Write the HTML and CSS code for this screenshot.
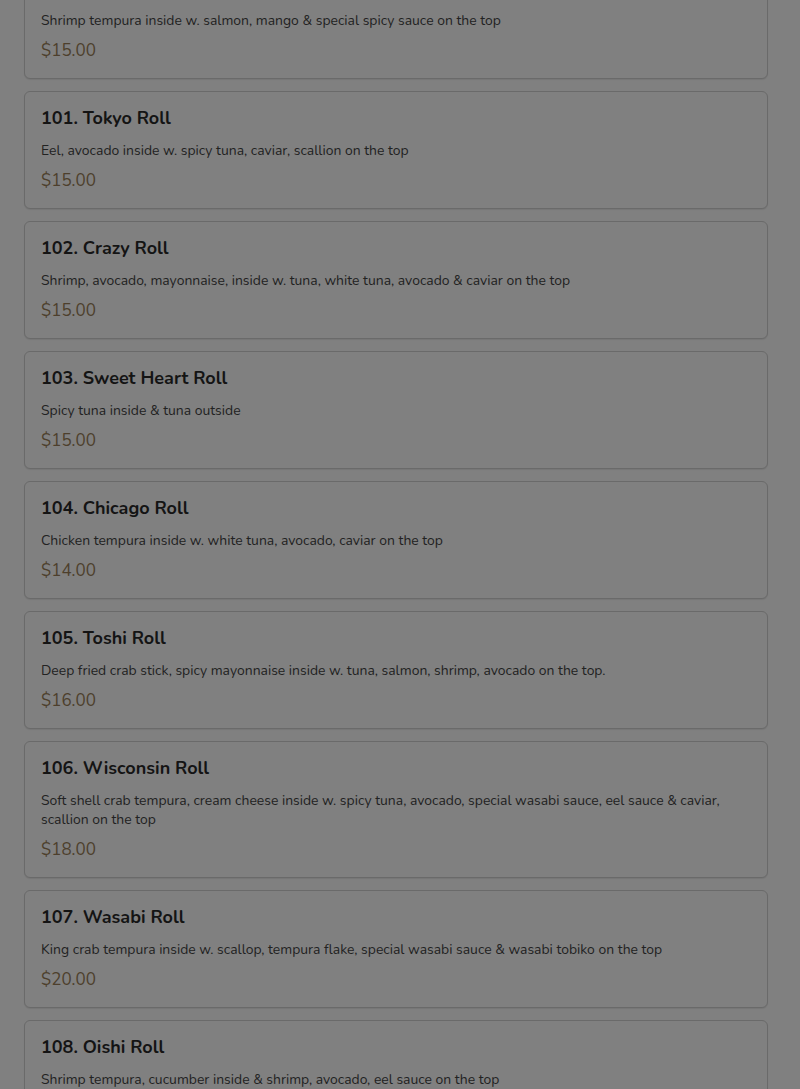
FILE: index.html
```html
<!DOCTYPE html>
<html>
<head>
<meta charset="utf-8">
<link rel="stylesheet" href="styles.css">
</head>
<body>
<div class="menu">
  <div class="card first">
    <h3 class="name">100. Mango Roll</h3>
    <p class="desc">Shrimp tempura inside w. salmon, mango &amp; special spicy sauce on the top</p>
    <div class="price">$15.00</div>
  </div>
  <div class="card">
    <h3 class="name">101. Tokyo Roll</h3>
    <p class="desc">Eel, avocado inside w. spicy tuna, caviar, scallion on the top</p>
    <div class="price">$15.00</div>
  </div>
  <div class="card">
    <h3 class="name">102. Crazy Roll</h3>
    <p class="desc">Shrimp, avocado, mayonnaise, inside w. tuna, white tuna, avocado &amp; caviar on the top</p>
    <div class="price">$15.00</div>
  </div>
  <div class="card">
    <h3 class="name">103. Sweet Heart Roll</h3>
    <p class="desc">Spicy tuna inside &amp; tuna outside</p>
    <div class="price">$15.00</div>
  </div>
  <div class="card">
    <h3 class="name">104. Chicago Roll</h3>
    <p class="desc">Chicken tempura inside w. white tuna, avocado, caviar on the top</p>
    <div class="price">$14.00</div>
  </div>
  <div class="card">
    <h3 class="name">105. Toshi Roll</h3>
    <p class="desc">Deep fried crab stick, spicy mayonnaise inside w. tuna, salmon, shrimp, avocado on the top.</p>
    <div class="price">$16.00</div>
  </div>
  <div class="card">
    <h3 class="name">106. Wisconsin Roll</h3>
    <p class="desc">Soft shell crab tempura, cream cheese inside w. spicy tuna, avocado, special wasabi sauce, eel sauce &amp; caviar, scallion on the top</p>
    <div class="price">$18.00</div>
  </div>
  <div class="card">
    <h3 class="name">107. Wasabi Roll</h3>
    <p class="desc">King crab tempura inside w. scallop, tempura flake, special wasabi sauce &amp; wasabi tobiko on the top</p>
    <div class="price">$20.00</div>
  </div>
  <div class="card">
    <h3 class="name">108. Oishi Roll</h3>
    <p class="desc">Shrimp tempura, cucumber inside &amp; shrimp, avocado, eel sauce on the top</p>
    <div class="price">$16.00</div>
  </div>
</div>
</body>
</html>
```
FILE: styles.css
```css
html, body {
  margin: 0;
  padding: 0;
  background: #808080;
  overflow: hidden;
  height: 1089px;
}
body {
  font-family: "Nunito", "Lato", "Open Sans", sans-serif;
}
.menu {
  display: flex;
  flex-direction: column;
  gap: 12px;
  padding: 0 32px 0 24px;
  margin-top: -39px;
}
.card {
  border: 1px solid #6a6a6a;
  border-radius: 6px;
  padding: 15px 16px 16px 16px;
  background: #808080;
  box-shadow: 0 1px 1px rgba(0,0,0,0.08);
}
.name {
  margin: 0 0 12px 0;
  font-size: 18px;
  line-height: 22px;
  font-weight: 700;
  color: #141414;
}
.desc {
  margin: 0 0 10px 0;
  font-size: 13.93px;
  line-height: 19px;
  color: #222222;
}
.price {
  font-size: 17px;
  line-height: 22px;
  color: #4d3f2c;
}
```
